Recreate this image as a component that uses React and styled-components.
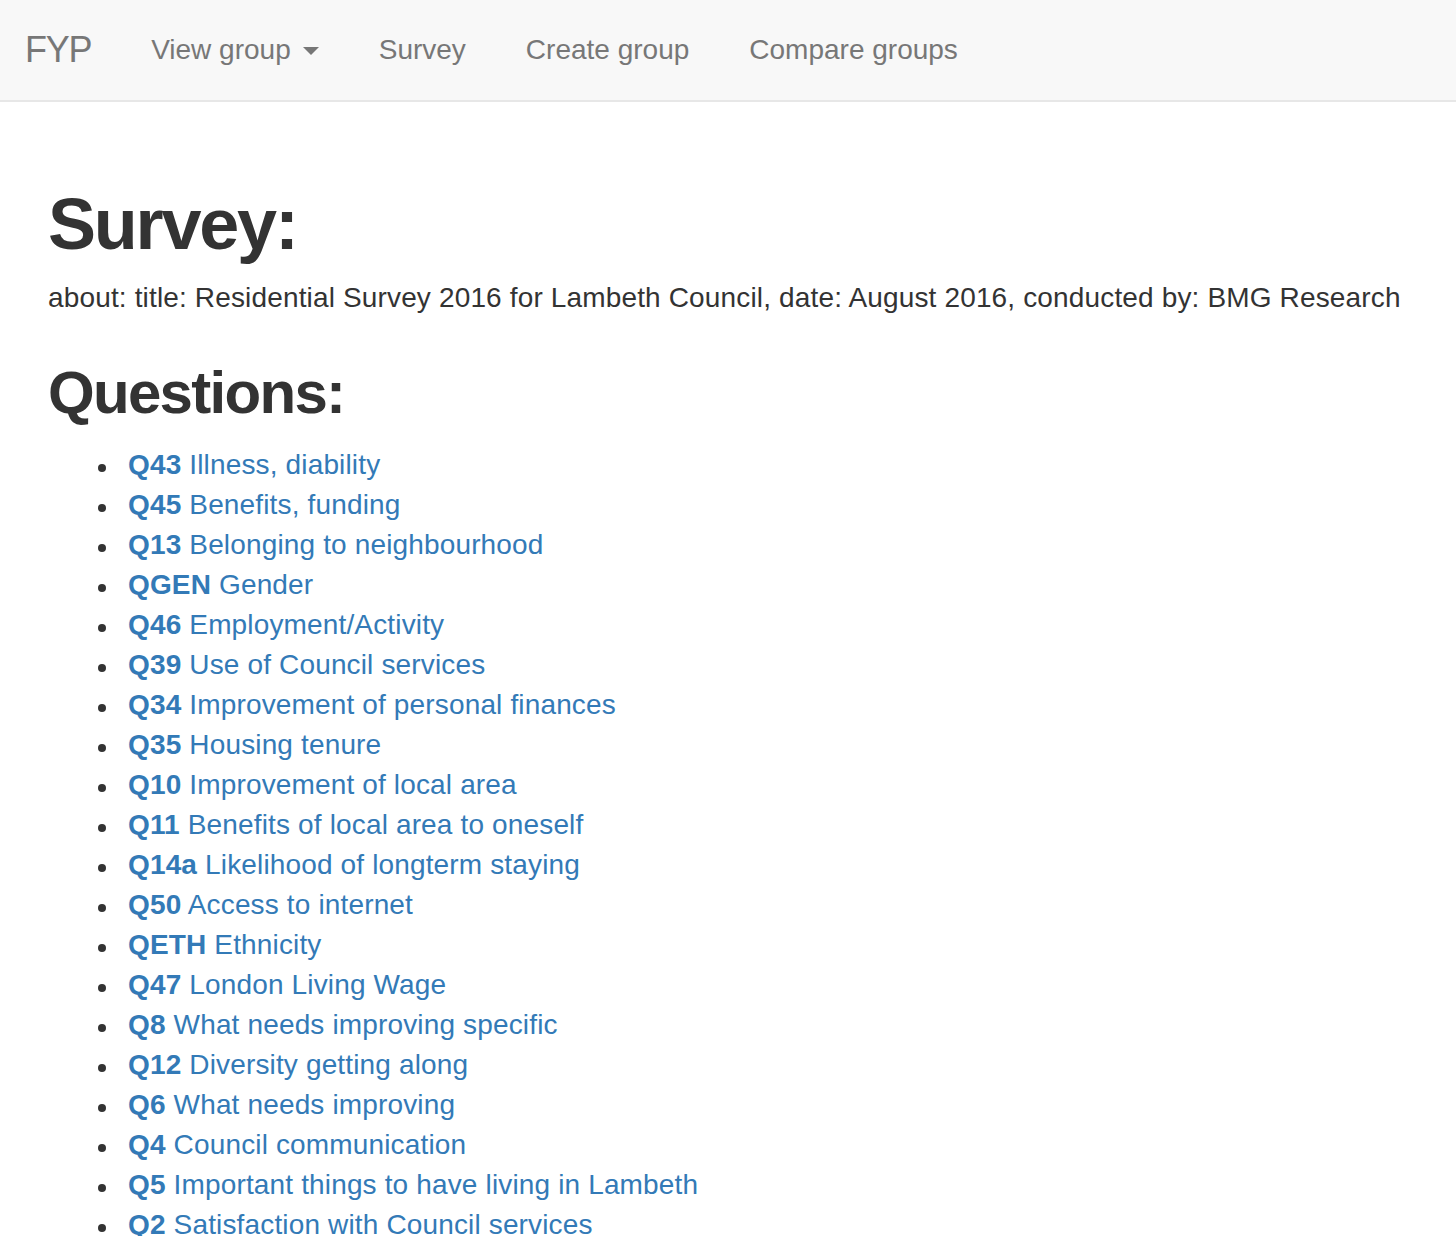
import React from "react";
import styled, { createGlobalStyle } from "styled-components";

const Global = createGlobalStyle`
  html, body { margin: 0; padding: 0; background: #fff; }
  body {
    font-family: "Liberation Sans", Arial, sans-serif;
    font-size: 28px;
    line-height: 40px;
    color: #333;
  }
  * { box-sizing: border-box; }
`;

const Navbar = styled.nav`
  height: 102px;
  background: #f8f8f8;
  border-bottom: 2px solid #e7e7e7;
  display: flex;
  align-items: center;
`;

const Brand = styled.a`
  font-size: 36px;
  line-height: 40px;
  letter-spacing: -1.3px;
  color: #777;
  padding: 30px 30px 30px 25px;
  text-decoration: none;
`;

const NavList = styled.ul`
  display: flex;
  list-style: none;
  margin: 0;
  padding: 0;
`;

const NavLink = styled.a`
  display: flex;
  align-items: center;
  gap: 12px;
  padding: 30px;
  color: #777;
  font-size: 28px;
  line-height: 40px;
  text-decoration: none;
`;

const Caret = styled.span`
  display: inline-block;
  width: 0;
  height: 0;
  border-top: 8px solid #777;
  border-left: 8px solid transparent;
  border-right: 8px solid transparent;
  margin-top: 2px;
`;

const Container = styled.main`
  padding: 0 48px;
`;

const Title = styled.h1`
  font-size: 72px;
  line-height: 80px;
  font-weight: 700;
  color: #333;
  letter-spacing: -2.2px;
  margin: 82px 0 14px;
`;

const Subtitle = styled.h2`
  font-size: 60px;
  line-height: 66px;
  font-weight: 700;
  color: #333;
  letter-spacing: -1.7px;
  margin: 42px 0 19px;
`;

const About = styled.p`
  margin: 0;
  font-size: 28px;
  line-height: 40px;
  letter-spacing: 0.15px;
  color: #333;
`;

const QuestionList = styled.ul`
  margin: 0;
  padding-left: 80px;
  list-style: none;
`;

const Item = styled.li`
  position: relative;
  font-size: 28px;
  line-height: 40px;
  letter-spacing: 0.15px;

  &::before {
    content: "";
    position: absolute;
    left: -30px;
    top: 19px;
    width: 8px;
    height: 8px;
    border-radius: 50%;
    background: #333;
  }
`;

const QLink = styled.a`
  color: #337ab7;
  text-decoration: none;
  b { font-weight: 700; }
`;

const questions = [
  ["Q43", "Illness, diability"],
  ["Q45", "Benefits, funding"],
  ["Q13", "Belonging to neighbourhood"],
  ["QGEN", "Gender"],
  ["Q46", "Employment/Activity"],
  ["Q39", "Use of Council services"],
  ["Q34", "Improvement of personal finances"],
  ["Q35", "Housing tenure"],
  ["Q10", "Improvement of local area"],
  ["Q11", "Benefits of local area to oneself"],
  ["Q14a", "Likelihood of longterm staying"],
  ["Q50", "Access to internet"],
  ["QETH", "Ethnicity"],
  ["Q47", "London Living Wage"],
  ["Q8", "What needs improving specific"],
  ["Q12", "Diversity getting along"],
  ["Q6", "What needs improving"],
  ["Q4", "Council communication"],
  ["Q5", "Important things to have living in Lambeth"],
  ["Q2", "Satisfaction with Council services"],
];

export default function App() {
  return (
    <>
      <Global />
      <Navbar>
        <Brand href="#">FYP</Brand>
        <NavList>
          <li>
            <NavLink href="#">
              View group <Caret />
            </NavLink>
          </li>
          <li>
            <NavLink href="#">Survey</NavLink>
          </li>
          <li>
            <NavLink href="#">Create group</NavLink>
          </li>
          <li>
            <NavLink href="#">Compare groups</NavLink>
          </li>
        </NavList>
      </Navbar>
      <Container>
        <Title>Survey:</Title>
        <About>
          about: title: Residential Survey 2016 for Lambeth Council, date: August 2016, conducted by: BMG Research
        </About>
        <Subtitle>Questions:</Subtitle>
        <QuestionList>
          {questions.map(([code, label]) => (
            <Item key={code}>
              <QLink href="#">
                <b>{code}</b> {label}
              </QLink>
            </Item>
          ))}
        </QuestionList>
      </Container>
    </>
  );
}
